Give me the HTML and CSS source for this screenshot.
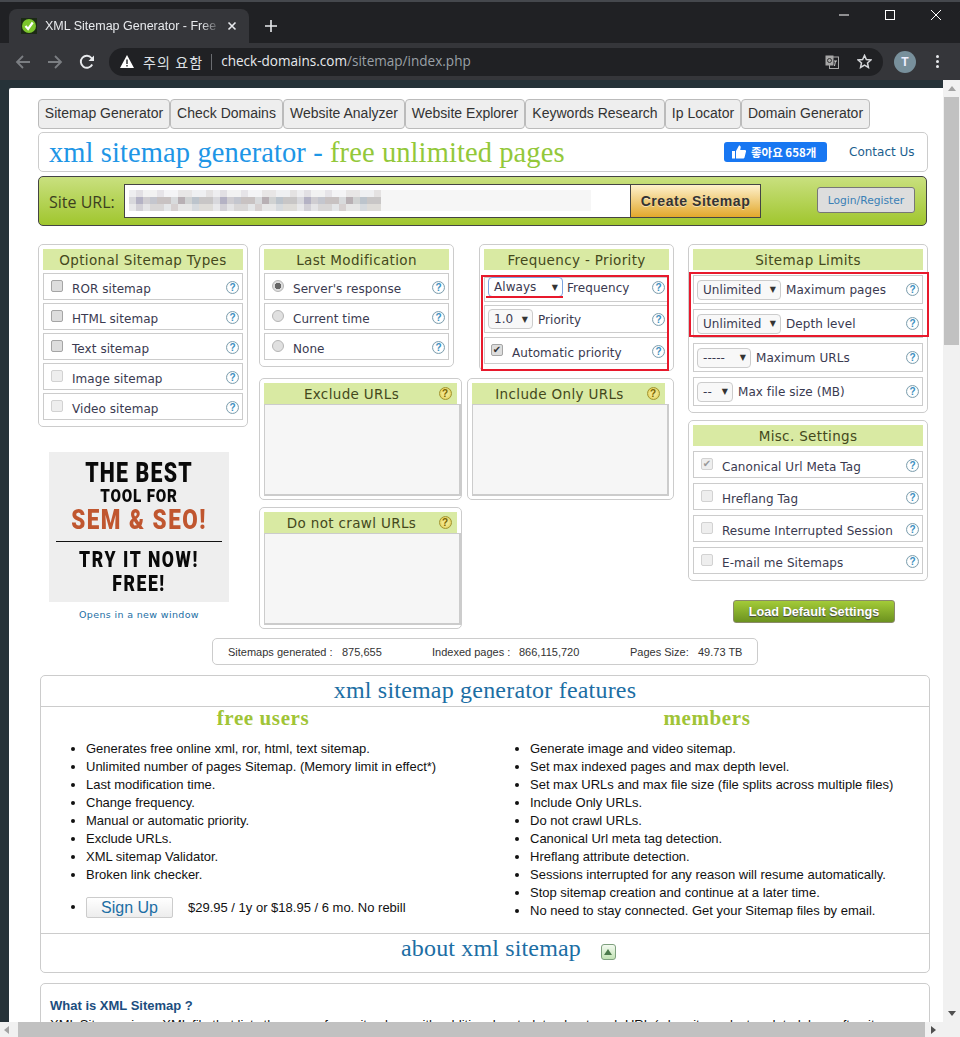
FILE: index.html
```html
<!DOCTYPE html>
<html lang="en">
<head>
<meta charset="utf-8">
<title>XML Sitemap Generator</title>
<link rel="stylesheet" href="styles.css">
</head>
<body>
<div class="browser">
  <div class="tabstrip">
    <div class="tab">
      <span class="favicon"><svg viewBox="0 0 16 16" width="16" height="16"><rect width="16" height="16" fill="#1c2a16"/><circle cx="8" cy="8" r="7" fill="#7cc52c"/><path d="M4.500 8l2.600 3 4.600-6.500" fill="none" stroke="#fff" stroke-width="2.200"/></svg></span>
      <span class="tabtitle">XML Sitemap Generator - Free U</span>
      <svg class="tabclose" viewBox="0 0 10 10" width="10" height="10"><path d="M1.500 1.500l7 7M8.500 1.500l-7 7" stroke="#e8eaed" stroke-width="1.600"/></svg>
    </div>
    <svg class="newtab" viewBox="0 0 12 12" width="12" height="12"><path d="M6 0v12M0 6h12" stroke="#e8eaed" stroke-width="1.600"/></svg>
    <div class="winctrl">
      <svg viewBox="0 0 10 10" width="10" height="10"><path d="M0 5h10" stroke="#fff"/></svg>
      <svg viewBox="0 0 10 10" width="10" height="10"><rect x=".5" y=".5" width="9" height="9" fill="none" stroke="#fff"/></svg>
      <svg viewBox="0 0 10 10" width="10" height="10"><path d="M0 0l10 10M10 0L0 10" stroke="#fff"/></svg>
    </div>
  </div>
  <div class="toolbar">
    <svg class="tbicon" viewBox="0 0 16 16" width="16" height="16"><path d="M15 8H2M8 2L2 8l6 6" fill="none" stroke="#7b7e82" stroke-width="1.800"/></svg>
    <svg class="tbicon" viewBox="0 0 16 16" width="16" height="16"><path d="M1 8h13M8 2l6 6-6 6" fill="none" stroke="#7b7e82" stroke-width="1.800"/></svg>
    <svg class="tbicon" viewBox="0 0 16 16" width="16" height="16"><path d="M13.200 10.500A6 6 0 1 1 12.500 4L14.500 6" fill="none" stroke="#e8eaed" stroke-width="1.900"/><path d="M15 1.500V7H9.500z" fill="#e8eaed"/></svg>
    <div class="omnibox">
      <svg class="warn" viewBox="0 0 14 13" width="14" height="13"><path d="M7 0l7 13H0z" fill="#fff"/><path d="M6.300 4.500h1.400v4.500H6.300zM6.300 10h1.400v1.400H6.300z" fill="#202124"/></svg>
      <span class="warntext">주의 요함</span>
      <span class="omnisep"></span>
      <span class="url">check-domains.com<span class="urlpath">/sitemap/index.php</span></span>
      <span class="omnispace"></span>
      <svg class="translate" viewBox="0 0 14 14" width="14" height="14"><rect x="4.500" y="2" width="9" height="11.500" fill="none" stroke="#aaa"/><rect x=".5" y=".5" width="8" height="10" fill="#a8a8a8"/><circle cx="4.500" cy="5.500" r="2" fill="none" stroke="#333"/><path d="M9 6h3M10.500 6l-1 5" stroke="#ccc"/></svg>
      <svg class="star" viewBox="0 0 16 16" width="15" height="15"><path d="M8 1.500l2 4.400 4.800.5-3.600 3.200 1 4.700L8 11.900l-4.200 2.400 1-4.700L1.200 6.400l4.800-.5z" fill="none" stroke="#d5d7da" stroke-width="1.600"/></svg>
    </div>
    <span class="avatar">T</span>
    <span class="menu"><i></i><i></i><i></i></span>
  </div>
  <div class="viewport">
    <div class="pagewrap">
      <main class="page">
        <nav class="nav">
          <a class="navbtn w132">Sitemap Generator</a><a class="navbtn w113">Check Domains</a><a class="navbtn w122">Website Analyzer</a><a class="navbtn w120">Website Explorer</a><a class="navbtn w140">Keywords Research</a><a class="navbtn w76">Ip Locator</a><a class="navbtn w129">Domain Generator</a>
        </nav>
        <header class="head">
          <h1 class="headline"><span class="blue">xml sitemap generator -</span> <span class="green">free unlimited pages</span></h1>
          <span class="like"><svg viewBox="0 0 14 14" width="14" height="14"><path d="M0 6h3v7.500H0zM4 6l3-5.500c1.400 0 2 1 1.600 2.400L8.200 5H13c.8 0 1.200.8 1 1.500l-1.500 6c-.2.600-.6 1-1.200 1H4z" fill="#fff"/></svg>좋아요 658개</span>
          <a class="contact">Contact Us</a>
        </header>
        <form class="urlbar">
          <label class="urllabel">Site URL:</label>
          <div class="urlinput"><div class="blur"><i class="m1"></i><i class="m2"></i><i class="m3"></i></div></div>
          <button type="button" class="create">Create Sitemap</button>
          <button type="button" class="login">Login/Register</button>
        </form>

        <section class="options">
          <div class="col1">
            <div class="panel p-types">
              <h3 class="ptitle">Optional Sitemap Types</h3>
              <div class="row"><span class="cb"></span><span class="lbl">ROR sitemap</span><span class="help">?</span></div>
              <div class="row"><span class="cb"></span><span class="lbl">HTML sitemap</span><span class="help">?</span></div>
              <div class="row"><span class="cb"></span><span class="lbl">Text sitemap</span><span class="help">?</span></div>
              <div class="row"><span class="cb off"></span><span class="lbl">Image sitemap</span><span class="help">?</span></div>
              <div class="row"><span class="cb off"></span><span class="lbl">Video sitemap</span><span class="help">?</span></div>
            </div>
            <div class="ad">
              <div class="ad1">THE BEST</div>
              <div class="ad2">TOOL FOR</div>
              <div class="ad3">SEM &amp; SEO!</div>
              <hr class="adrule">
              <div class="ad4">TRY IT NOW!</div>
              <div class="ad4">FREE!</div>
            </div>
            <div class="adnote">Opens in a new window</div>
          </div>

          <div class="col2">
            <div class="top2">
              <div class="panel p-last">
                <h3 class="ptitle">Last Modification</h3>
                <div class="row"><span class="rb on"></span><span class="lbl">Server's response</span><span class="help">?</span></div>
                <div class="row"><span class="rb"></span><span class="lbl">Current time</span><span class="help">?</span></div>
                <div class="row"><span class="rb"></span><span class="lbl">None</span><span class="help">?</span></div>
              </div>
              <div class="panel p-freq">
                <h3 class="ptitle">Frequency - Priority</h3>
                <div class="row r-a"><span class="sel focus w74">Always<b>▼</b></span><span class="lbl s4">Frequency</span><span class="help">?</span></div>
                <div class="row r-b"><span class="sel w45">1.0<b>▼</b></span><span class="lbl s4">Priority</span><span class="help">?</span></div>
                <div class="row r-c"><span class="cb dark">✔</span><span class="lbl">Automatic priority</span><span class="help">?</span></div>
                <span class="redbox rb-freq"></span>
                <span class="redline"></span>
              </div>
            </div>
            <div class="mid2">
              <div class="panel p-url">
                <h3 class="ptitle t-url">Exclude URLs<span class="help gold">?</span></h3>
                <div class="ta"></div>
              </div>
              <div class="panel p-url p-inc">
                <h3 class="ptitle t-url">Include Only URLs<span class="help gold">?</span></h3>
                <div class="ta"></div>
              </div>
            </div>
            <div class="panel p-url">
              <h3 class="ptitle t-url">Do not crawl URLs<span class="help gold">?</span></h3>
              <div class="ta"></div>
            </div>
          </div>

          <div class="col3">
            <div class="panel p-limits">
              <h3 class="ptitle">Sitemap Limits</h3>
              <div class="row r-l"><span class="sel w84">Unlimited<b>▼</b></span><span class="lbl s4">Maximum pages</span><span class="help">?</span></div>
              <div class="row r-l"><span class="sel w84">Unlimited<b>▼</b></span><span class="lbl s4">Depth level</span><span class="help">?</span></div>
              <div class="row r-l"><span class="sel w54">-----<b>▼</b></span><span class="lbl s4">Maximum URLs</span><span class="help">?</span></div>
              <div class="row r-l"><span class="sel w36">--<b>▼</b></span><span class="lbl s4">Max file size (MB)</span><span class="help">?</span></div>
              <span class="redbox rb-limits"></span>
            </div>
            <div class="panel p-misc">
              <h3 class="ptitle">Misc. Settings</h3>
              <div class="row"><span class="cb off tick">✔</span><span class="lbl">Canonical Url Meta Tag</span><span class="help">?</span></div>
              <div class="row"><span class="cb off"></span><span class="lbl">Hreflang Tag</span><span class="help">?</span></div>
              <div class="row"><span class="cb off"></span><span class="lbl">Resume Interrupted Session</span><span class="help">?</span></div>
              <div class="row"><span class="cb off"></span><span class="lbl">E-mail me Sitemaps</span><span class="help">?</span></div>
            </div>
            <div class="loadwrap"><button type="button" class="load">Load Default Settings</button></div>
          </div>
        </section>

        <div class="stats">
          <span>Sitemaps generated :</span><span>875,655</span><span>Indexed pages :</span><span>866,115,720</span><span>Pages Size:</span><span>49.73 TB</span>
        </div>

        <section class="features">
          <h2 class="ftitle">xml sitemap generator features</h2>
          <div class="fcols">
            <div class="fcol">
              <h3 class="fhead">free users</h3>
              <ul class="flist">
                <li>Generates free online xml, ror, html, text sitemap.</li>
                <li>Unlimited number of pages Sitemap. (Memory limit in effect*)</li>
                <li>Last modification time.</li>
                <li>Change frequency.</li>
                <li>Manual or automatic priority.</li>
                <li>Exclude URLs.</li>
                <li>XML sitemap Validator.</li>
                <li>Broken link checker.</li>
                <li class="signli"><button type="button" class="signup">Sign Up</button><span class="price">$29.95 / 1y or $18.95 / 6 mo. No rebill</span></li>
              </ul>
            </div>
            <div class="fcol">
              <h3 class="fhead">members</h3>
              <ul class="flist">
                <li>Generate image and video sitemap.</li>
                <li>Set max indexed pages and max depth level.</li>
                <li>Set max URLs and max file size (file splits across multiple files)</li>
                <li>Include Only URLs.</li>
                <li>Do not crawl URLs.</li>
                <li>Canonical Url meta tag detection.</li>
                <li>Hreflang attribute detection.</li>
                <li>Sessions interrupted for any reason will resume automatically.</li>
                <li>Stop sitemap creation and continue at a later time.</li>
                <li>No need to stay connected. Get your Sitemap files by email.</li>
              </ul>
            </div>
          </div>
          <div class="about"><h2 class="abouttitle">about xml sitemap</h2><span class="toggle"></span></div>
        </section>

        <section class="whatis">
          <h4 class="whath">What is XML Sitemap ?</h4>
          <p class="whatp">XML Sitemap is an XML file that lists the pages for a site along with additional metadata about each URL (when it was last updated, how often it</p>
        </section>
      </main>
      <div class="vscroll"><span class="arrow-up"></span><span class="vthumb"></span><span class="vfill"></span><span class="arrow-down"></span></div>
    </div>
    <div class="hscroll"><span class="arrow-left"></span><span class="hthumb"></span><span class="arrow-right"></span></div>
  </div>
</div>
</body>
</html>
```
FILE: styles.css
```css
*{box-sizing:border-box}
html,body{margin:0;padding:0;height:100%;overflow:hidden}
body{font-family:"DejaVu Sans",sans-serif;background:#263238}
a{text-decoration:none;color:inherit}
h1,h2,h3,h4,p,ul{margin:0;padding:0;font-weight:normal}
.browser{width:960px;height:1037px;display:flex;flex-direction:column}

.tabstrip{height:43px;background:#202124;border-top:2px solid #45484d;display:flex;align-items:flex-end;position:relative;flex:none}
.tab{width:240px;height:34px;margin-left:9px;background:#35363a;border-radius:8px 8px 0 0;display:flex;align-items:center;padding:0 12px;color:#e8eaed;font:13px "Open Sans",sans-serif}
.favicon{width:16px;height:16px;flex:none;display:flex}
.tabtitle{margin-left:8px;width:176px;white-space:nowrap;overflow:hidden;-webkit-mask-image:linear-gradient(90deg,#000 156px,transparent 176px);mask-image:linear-gradient(90deg,#000 156px,transparent 176px);font-family:"Liberation Sans",sans-serif;font-size:12.5px}
.tabclose{margin-left:auto;margin-right:0}
.newtab{margin:0 0 11px 16px}
.winctrl{position:absolute;right:19px;top:8px;display:flex;gap:36px}
.toolbar{height:37px;background:#35363a;display:flex;align-items:center;padding:0 0 0 15px;flex:none}
.tbicon{margin-right:16px;flex:none}
.omnibox{width:774px;height:28px;margin-left:-2px;background:#202124;border-radius:14px;display:flex;align-items:center;padding:0 11px 0 11px}
.warn{flex:none}
.warntext{margin-left:9px;font:14px "Noto Sans CJK KR",sans-serif;color:#dfe1e5;letter-spacing:1.1px;white-space:nowrap}
.omnisep{width:1px;height:16px;background:#6a6c70;margin:0 9px 0 8px}
.url{font:13.55px/18px "Open Sans",sans-serif;color:#e8eaed;white-space:nowrap;margin-top:-2px}
.urlpath{color:#9aa0a6}
.omnispace{flex:1}
.translate{margin-right:18px}
.star{margin-right:0}
.avatar{width:22px;height:22px;border-radius:50%;background:#78909c;color:#eef;font:bold 12px "Liberation Sans",sans-serif;display:flex;align-items:center;justify-content:center;margin-left:11px}
.menu{display:flex;flex-direction:column;gap:2px;margin-left:20px}
.menu i{width:3px;height:3px;background:#e8eaed;border-radius:50%}

.viewport{flex:1;min-height:0;display:flex;flex-direction:column;background:#263238}
.pagewrap{flex:1;min-height:0;display:flex}
.page{margin:8px 0 0 9px;width:934px;flex:none;background:#fff;padding:11px 0 0 29px;overflow:hidden;border-radius:2px 0 0 0}
.vscroll{flex:1;background:#f1f1f1;display:flex;flex-direction:column;align-items:center}
.arrow-up{width:0;height:0;border:4px solid transparent;border-top:0;border-bottom:5px solid #a3a3a3;margin:6px 0 6px}
.vthumb{width:15px;height:248px;background:#c1c1c1}
.vfill{flex:1}
.arrow-down{width:0;height:0;border:4px solid transparent;border-bottom:0;border-top:5px solid #505050;margin:0 0 6px}
.hscroll{height:15px;flex:none;background:#f1f1f1;display:flex;align-items:center}
.arrow-left{width:0;height:0;border:4px solid transparent;border-left:0;border-right:5px solid #a3a3a3;margin:0 9px 0 4px}
.hthumb{width:907px;height:15px;background:#c1c1c1}
.arrow-right{width:0;height:0;border:4px solid transparent;border-right:0;border-left:5px solid #505050;margin-left:6px}

.nav{display:flex;height:30px}
.navbtn{height:30px;background:#eee;border:1px solid #bbb;border-radius:4px;font:14px/26px "Liberation Sans",sans-serif;color:#333;text-align:center;white-space:nowrap;flex:none}
.w132{width:132px}.w113{width:113px}.w122{width:122px}.w120{width:120px}.w140{width:140px}.w76{width:76px}.w129{width:129px}
.head{margin-top:3px;width:890px;height:40px;border:1px solid #ccc;border-radius:5px;display:flex;align-items:center;padding:0 13px 0 10px}
.headline{font:28.5px/38px "Liberation Serif",serif;white-space:nowrap;letter-spacing:.1px;padding-top:2px}
.blue{color:#1e96e6}.green{color:#93c83a}
.like{margin-left:auto;width:103px;height:20px;background:#1877f2;border-radius:3px;color:#fff;font:bold 11.5px/20px "Noto Sans CJK KR",sans-serif;display:flex;align-items:center;padding-left:8px;gap:5px;white-space:nowrap}
.contact{margin-left:22px;font-size:12px;color:#1c5e8e;white-space:nowrap;width:65px}
.urlbar{margin-top:4px;width:889px;height:50px;border:1px solid #444;border-radius:5px;background:linear-gradient(#c9e07f,#a0c62e);display:flex;align-items:center;padding-left:10px}
.urllabel{font:16px "Open Sans",sans-serif;color:#3c4020;width:75px;flex:none;white-space:nowrap;padding-top:2px}
.urlinput{width:506px;height:34px;background:#fff;border:1px solid #444;border-right:0;padding:5px 0 0 4px;flex:none}
.blur{width:462px;height:21px;background:#f6f6f6;display:flex;flex-direction:column}
.blur i{display:block;height:7px;width:252px;background-size:84px 7px}
.m1{background:linear-gradient(90deg,#eeeef0 0 7px,#e2e0e4 7px 14px,#f2f2f2 14px 28px,#e6e4e8 28px 35px,#f4f4f6 35px 49px,#e8e6e6 49px 63px,#eff0f2 63px 77px,#e4e2e2 77px 84px)}
.m2{background:linear-gradient(90deg,#d8d8dc 0 7px,#b4b2c4 7px 14px,#cfcdd1 14px 21px,#c4c6ce 21px 28px,#c8c2c2 28px 42px,#d8dadc 42px 49px,#b8b0b4 49px 56px,#d0d2d2 56px 63px,#bcc4cc 63px 70px,#c8c6c6 70px 84px)}
.m3{background:linear-gradient(90deg,#e8e8ea 0 7px,#d2d0d6 7px 14px,#e4e4e6 14px 21px,#d8d6d6 21px 35px,#e4e6e8 35px 42px,#d6d0d0 42px 49px,#e6e6e6 49px 63px,#d6dade 63px 70px,#dedcd8 70px 84px)}
.create{width:131px;height:34px;border:1px solid #444;background:linear-gradient(#fef1cc,#e2a82c);font:bold 14px "Liberation Sans",sans-serif;letter-spacing:.55px;color:#333;padding:0;flex:none;text-shadow:0 1px 0 rgba(255,255,255,.5)}
.login{margin-left:56px;width:98px;height:26px;background:#ddd;border:1px solid #777;border-radius:3px;font:10.7px/22px "DejaVu Sans",sans-serif;color:#3a7fb5;padding:2px 0 0;margin-top:-3px;flex:none}

.options{margin-top:18px;display:flex;width:890px;height:394px;align-items:flex-start}
.col1{width:210px;flex:none}
.col2{width:415px;margin-left:11px;flex:none;display:flex;flex-direction:column}
.col3{width:240px;margin-left:14px;flex:none}
.panel{border:1px solid #ccc;border-radius:5px;padding:4px;position:relative;background:#fff}
.ptitle{height:21px;background:#d9eaa3;color:#44481c;font-size:13.5px;line-height:23px;text-align:center;letter-spacing:.35px;white-space:nowrap}
.row{height:27px;margin-top:3px;border:1px solid #ccc;display:flex;align-items:center;padding:0 8px 0 7px;font-size:12px;color:#3a3a50;letter-spacing:.06px;white-space:nowrap}
.lbl{margin-left:9px;margin-top:4px}
.lbl.s4{margin-left:4px}
.help{margin-left:auto;margin-top:2px;width:13px;height:13px;flex:none;border:1px solid #7f9fae;border-radius:50%;background:radial-gradient(#fff 55%,#cfe3ee);color:#3b8fc1;font:bold 10px/11px "Liberation Sans",sans-serif;text-align:center;letter-spacing:0;margin-right:-5px}
.cb{width:12px;height:12px;flex:none;background:#ddd;border:1px solid #a5a5a5;border-radius:2px;margin-top:-1px;font-size:10px;line-height:10px;text-align:center;letter-spacing:0}
.cb.off{background:#eee;border-color:#d2d2d2}
.cb.dark{color:#333;background:#ddd}
.cb.tick{color:#999}
.rb{width:12px;height:12px;flex:none;border-radius:50%;background:#e0e0e0;border:1px solid #b5b5b5;margin:-1px 0 0 0;display:block}
.rb.on{background:radial-gradient(circle,#666 0 3px,#ddd 3.5px)}
.p-types{height:183px}
.p-last{width:195px;height:123px}
.p-freq{width:195px;height:127px}
.top2{display:flex;justify-content:space-between;height:134px}
.r-a{height:25px;margin-top:7px;padding-left:3px;padding-bottom:5px}
.r-a .lbl{margin-top:1px}
.r-a .help{margin-top:0}
.r-b{height:28px;padding-left:3px}
.r-b .lbl{margin-top:2px;margin-left:5px}
.r-b .help{margin-top:0}
.r-c{height:27px;margin-top:4px;padding-left:6px}
.r-c .lbl{margin-left:9px}
.sel{height:20px;background:#f8f8f8;border:1px solid #ccc;border-radius:4px;display:flex;align-items:center;padding:0 4px 0 5px;justify-content:space-between;flex:none}
.sel b{font-size:8px;font-weight:normal;color:#333}
.focus{border-color:#7ba3e0;background:#fff}
.w74{width:75px}.w45{width:45px}.w84{width:84px}.w54{width:54px}.w36{width:36px}
.redbox{position:absolute;border:2px solid #e8192c;pointer-events:none}
.rb-freq{left:1px;top:30px;width:188px;height:96px}
.redline{position:absolute;left:6px;top:51px;width:77px;height:2px;background:#e8192c}
.rb-limits{left:0;top:27px;width:240px;height:65px}
.mid2{display:flex;justify-content:space-between;height:129px}
.p-url{width:203px;height:122px}
.p-inc{width:207px}
.t-url{position:relative;width:193px;padding-right:18px}
.t-url .help{position:absolute;right:5.5px;top:4px;margin:0}
.help.gold{background:radial-gradient(#f1e68a 40%,#d8c345);border-color:#a3942f;color:#7a6300}
.ta{height:92px;width:197px;background:#f6f6f6;border:1px solid #ccc;border-width:1px 2px 2px 1px}
.ad{margin:25px 0 0 11px;width:180px;height:150px;background:#eee;color:#0a0a0a;font-family:Roboto,sans-serif;font-weight:900;text-align:center;padding-top:6px}
.ad1{font-size:27px;line-height:30px;letter-spacing:1.5px;transform:scaleX(.79)}
.ad2{font-size:19px;line-height:16px;letter-spacing:1px;transform:scaleX(.8)}
.ad3{font-size:27px;line-height:32px;letter-spacing:1.8px;color:#c0562f;transform:scaleX(.83)}
.adrule{margin:5px 7px 6px;border:0;height:1px;background:#111}
.ad4{font-size:22px;line-height:24px;letter-spacing:2px;transform:scaleX(.8)}
.adnote{margin:7px 0 0 11px;width:180px;text-align:center;font-size:9.5px;color:#1c6ea4;letter-spacing:.35px}
.p-limits{height:169px}
.r-l{height:29px;margin-top:5px;padding-left:3px}
.r-l .lbl{margin-top:0;margin-left:5px}
.r-l .help{margin-top:0}
.p-misc{margin-top:7px;height:161px}
.p-misc .row{margin-top:5px}
.loadwrap{margin:19px 0 0 45px}
.load{width:162px;height:23px;border:1px solid #8a8a6a;border-radius:3px;background:linear-gradient(#a3cb38,#6c921f);color:#fff;font:bold 12.7px "Liberation Sans",sans-serif;padding:0;text-shadow:0 1px 1px #444}

.stats{margin:0 0 0 174px;width:546px;height:27px;border:1px solid #ccc;border-radius:5px;display:grid;grid-template-columns:114px 90px 87px 111px 68px auto;align-items:center;padding-left:15px;font:11px "Liberation Sans",sans-serif;color:#333;white-space:nowrap}
.features{margin:10px 0 0 2px;width:890px;height:298px;border:1px solid #ccc;border-radius:5px}
.ftitle{height:31px;border-bottom:1px solid #ccc;text-align:center;font:24px/29px "Liberation Serif",serif;color:#1c6ea4;letter-spacing:.2px}
.fcols{display:flex;height:226px}
.fcol{width:444px;flex:none}
.fhead{font:bold 21px/22px "Liberation Serif",serif;letter-spacing:.6px;color:#a0c436;text-align:center}
.flist{margin-top:11px;padding-left:45px;font:13px/18px "Liberation Sans",sans-serif;color:#111;list-style:disc}
.flist li{white-space:nowrap;height:18px}
.signli{margin-top:13px;height:22px!important;display:list-item}
.signup{width:87px;height:21px;background:linear-gradient(#fff,#ededed);border:1px solid #ccc;border-radius:2px;font:16px "Liberation Sans",sans-serif;color:#1c6ea4;padding:0;vertical-align:middle}
.price{margin-left:15px;vertical-align:middle}
.about{border-top:1px solid #ccc;display:flex;justify-content:center;align-items:center;height:38px;padding-left:47px;gap:20px}
.abouttitle{font:24px/30px "Liberation Serif",serif;color:#1c6ea4;letter-spacing:.15px;margin-bottom:9px}
.toggle{width:15px;height:16px;border:1px solid #7ea07e;border-radius:3px;background:linear-gradient(#f3faf0,#c2e2b4);margin-bottom:2px;display:flex;align-items:center;justify-content:center}
.toggle::before{content:"";border:4px solid transparent;border-top:0;border-bottom:6px solid #4d7a4d}
.whatis{margin:10px 0 0 2px;width:890px;height:80px;border:1px solid #ccc;border-radius:5px 5px 0 0;padding:14px 9px 0}
.whath{font:bold 13px/16px "Liberation Sans",sans-serif;color:#1c4e80}
.whatp{margin-top:3px;font:13px/16px "Liberation Sans",sans-serif;color:#111;white-space:nowrap}
```
